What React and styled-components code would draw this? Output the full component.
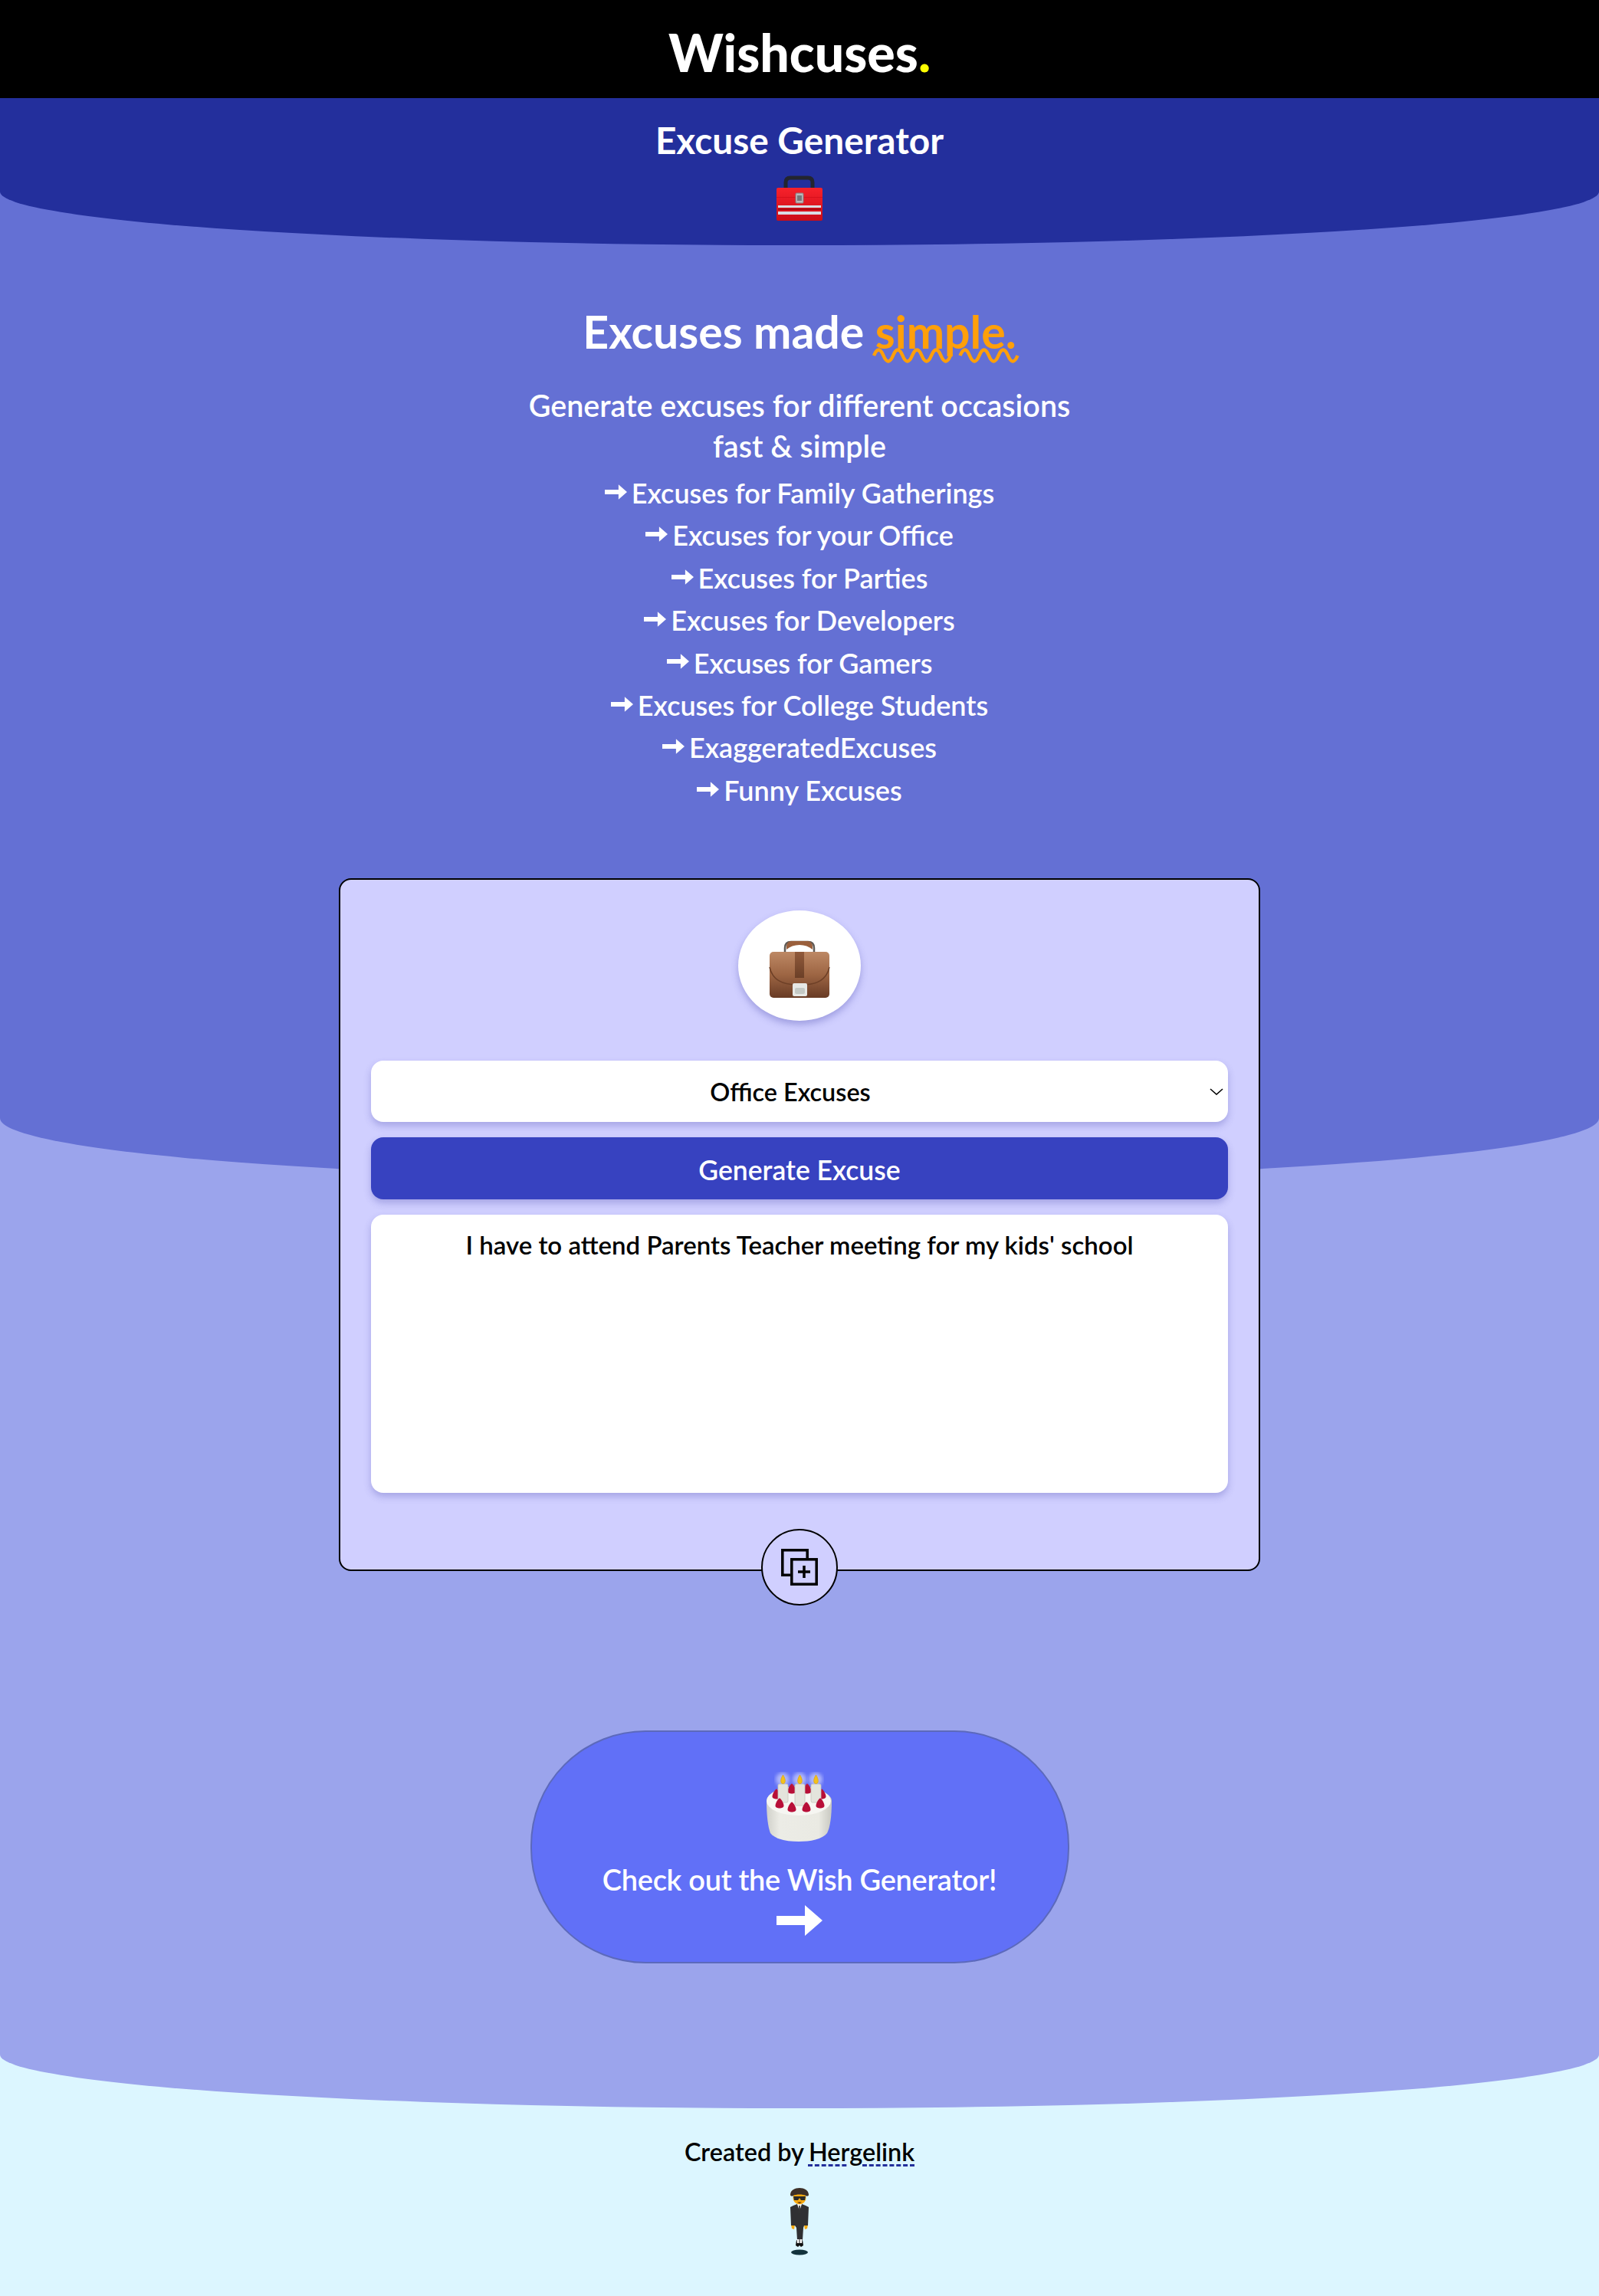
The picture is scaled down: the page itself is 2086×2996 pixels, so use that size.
import React from "react";
import styled, { createGlobalStyle } from "styled-components";

const CURVE = 70;
const INTRO_CURVE = 81;

const GlobalStyle = createGlobalStyle`
  html, body {
    margin: 0;
    padding: 0;
    background: #dcf6ff;
    font-family: Lato, "Noto Sans", sans-serif;
  }
  * { box-sizing: border-box; }
`;

const Header = styled.header`
  height: 128px;
  padding-top: 8px;
  background: #000;
  display: flex;
  justify-content: center;
  align-items: center;
  position: relative;
  z-index: 4;
`;
const Logo = styled.h1`
  margin: 0;
  color: #fff;
  font-size: 68px;
  font-weight: 900;
  line-height: 1;
  span { color: #ffff00; }
`;

const Band = styled.section`
  position: relative;
  display: flex;
  flex-direction: column;
  align-items: center;
  background: ${({ $bg }) => $bg};
  z-index: ${({ $layer }) => $layer};
  border-radius: 0 0 50% 50% / 0 0 ${({ $curve }) => $curve}px ${({ $curve }) => $curve}px;
`;
const ToolBand = styled(Band)`
  height: 192px;
  padding-top: 27px;
`;
const IntroBand = styled(Band)`
  margin-top: -${CURVE}px;
  padding-top: ${CURVE + 79}px;
`;
const WishBand = styled(Band)`
  margin-top: -${INTRO_CURVE}px;
  padding: 799px 0 189px;
`;

const ToolTitle = styled.h2`
  margin: 0 0 17px;
  color: #fff;
  font-size: 47.8px;
  line-height: 56px;
  font-weight: 700;
`;
const Headline = styled.h2`
  margin: 0 0 35px;
  color: #fff;
  font-size: 59px;
  line-height: 68px;
  font-weight: 700;
`;
const Simple = styled.span`
  position: relative;
  color: #ff9f0a;
`;
const Squiggle = styled.svg`
  position: absolute;
  left: -3px;
  top: 58px;
  width: 191px;
  height: 18px;
  overflow: visible;
  fill: none;
  stroke: #ff9f0a;
  stroke-width: 4.5;
`;
const Lead = styled.p`
  margin: 0 0 8px;
  color: #fff;
  font-size: 39.5px;
  line-height: 53px;
  font-weight: 600;
  text-align: center;
`;
const List = styled.ul`
  margin: 0 0 87px;
  padding: 0;
  list-style: none;
`;
const Item = styled.li`
  display: flex;
  justify-content: center;
  align-items: center;
  gap: 6px;
  color: #fff;
  font-size: 36px;
  line-height: 55.4px;
  font-weight: 600;
  svg { margin-top: -4px; }
`;

const Card = styled.div`
  position: relative;
  width: 1202px;
  margin-bottom: -510px;
  padding: 40px 40px 100px;
  display: flex;
  flex-direction: column;
  align-items: center;
  background: #d0cfff;
  border: 2px solid #000;
  border-radius: 16px;
`;
const Badge = styled.div`
  width: 160px;
  height: 144px;
  margin-bottom: 52px;
  display: flex;
  align-items: center;
  justify-content: center;
  background: #fff;
  border-radius: 50%;
  box-shadow: 0 5px 10px rgba(70, 70, 170, 0.35);
`;
const fieldShadow = "0 5px 10px rgba(70, 70, 170, 0.3)";
const SelectWrap = styled.div`
  position: relative;
  width: 100%;
  margin-bottom: 20px;
`;
const Select = styled.select`
  display: block;
  width: 100%;
  height: 80px;
  padding: 0 24px 0 0;
  appearance: none;
  border: none;
  border-radius: 16px;
  background: #fff;
  color: #000;
  font: 600 32.4px Lato, sans-serif;
  text-align: center;
  box-shadow: ${fieldShadow};
`;
const Chevron = styled.svg`
  position: absolute;
  right: 6px;
  top: 36px;
  width: 18px;
  height: 9px;
  fill: none;
  stroke: #000;
  stroke-width: 1.6;
  pointer-events: none;
`;
const Generate = styled.button`
  width: 100%;
  height: 81px;
  margin-bottom: 20px;
  padding: 3px 0 0;
  border: none;
  border-radius: 16px;
  background: #3742c0;
  color: #fff;
  font: 600 35.5px Lato, sans-serif;
  box-shadow: ${fieldShadow};
`;
const Output = styled.textarea`
  display: block;
  width: 100%;
  height: 363px;
  padding: 19px 16px 16px;
  border: none;
  border-radius: 16px;
  background: #fff;
  color: #000;
  font: 600 33px/40px Lato, sans-serif;
  text-align: center;
  resize: none;
  box-shadow: ${fieldShadow};
`;
const CopyButton = styled.button`
  position: absolute;
  left: 50%;
  bottom: -47px;
  width: 100px;
  height: 100px;
  margin-left: -50px;
  padding: 0;
  display: flex;
  align-items: center;
  justify-content: center;
  background: #d0cfff;
  border: 2px solid #000;
  border-radius: 50%;
`;

const Pill = styled.a`
  width: 703px;
  height: 304px;
  padding-top: 52px;
  display: flex;
  flex-direction: column;
  align-items: center;
  background: #6170f7;
  border: 2px solid #5c69bb;
  border-radius: 150px;
  color: #fff;
  text-decoration: none;
`;
const PillText = styled.span`
  margin: 20px 0 10px;
  font-size: 38px;
  line-height: 48px;
  font-weight: 600;
  letter-spacing: -0.3px;
`;

const Footer = styled.footer`
  margin-top: -${CURVE}px;
  padding: ${CURVE + 37}px 0 46px;
  display: flex;
  flex-direction: column;
  align-items: center;
  background: #dcf6ff;
`;
const Credit = styled.p`
  margin: 0 0 25px;
  display: flex;
  gap: 6px;
  color: #000;
  font-size: 32.4px;
  line-height: 40px;
  font-weight: 600;
`;
const CreditLink = styled.a`
  color: #000;
  text-decoration: underline dashed #232f9c 3px;
  text-underline-offset: 4px;
`;

const wave = (start, halves) => {
  let d = `M${start} 9q6.25 -15 12.5 0`;
  for (let i = 1; i < halves; i++) d += "t12.5 0";
  return d;
};

const Arrow = ({ width, height }) => (
  <svg width={width} height={height} viewBox="0 0 60 40" fill="#fff" aria-hidden="true">
    <path d="M0 14H37V0L60 20 37 40V26H0Z" />
  </svg>
);

const Toolbox = () => (
  <svg width="64" height="64" viewBox="0 0 64 64" aria-hidden="true">
    <defs>
      <linearGradient id="boxRed" x1="0" y1="0" x2="0" y2="1">
        <stop offset="0" stopColor="#f7212b" />
        <stop offset="1" stopColor="#cb0d18" />
      </linearGradient>
    </defs>
    <path d="M14 18V10Q14 4 20 4H43Q49 4 49 10V18" fill="none" stroke="#23252f" strokeWidth="5" />
    <rect x="2" y="17" width="60" height="43" rx="2" fill="url(#boxRed)" />
    <rect x="2" y="29" width="60" height="1" fill="#d8101c" />
    <rect x="4" y="40" width="56" height="3" fill="#d9dde4" />
    <rect x="4" y="48" width="56" height="4" fill="#d9dde4" />
    <rect x="4" y="44" width="56" height="2" fill="#a90a14" />
    <rect x="27" y="24" width="10" height="13" rx="1" fill="#b9b9bb" stroke="#8a7a7c" />
    <rect x="29" y="27" width="6" height="7" fill="#77777b" />
  </svg>
);

const Briefcase = () => (
  <svg width="96" height="96" viewBox="0 0 96 96" aria-hidden="true">
    <defs>
      <linearGradient id="caseBody" x1="0" y1="0" x2="0" y2="1">
        <stop offset="0" stopColor="#bd8864" />
        <stop offset="0.5" stopColor="#9d6543" />
        <stop offset="1" stopColor="#683b25" />
      </linearGradient>
      <linearGradient id="caseStrap" x1="0" y1="0" x2="0" y2="1">
        <stop offset="0" stopColor="#915a3b" />
        <stop offset="1" stopColor="#6b3f27" />
      </linearGradient>
    </defs>
    <path d="M29 32V25Q29 17 37 17H59Q67 17 67 25V32" fill="none" stroke="#5f5a55" strokeWidth="2.5" />
    <path d="M31 27V24Q31 16 38 16H58Q65 16 65 24V27Q58 21 48 21 38 21 31 27Z" fill="#9a5f3c" />
    <rect x="9" y="30" width="78" height="60" rx="5" fill="url(#caseBody)" />
    <path d="M9 50Q14 73 44 73H52Q82 73 87 50" fill="none" stroke="#6e4027" strokeWidth="1.5" />
    <rect x="42" y="30" width="12" height="34" fill="url(#caseStrap)" />
    <rect x="39" y="71" width="19" height="17" rx="2" fill="#e6e8e5" />
    <rect x="42" y="77" width="13" height="8" rx="2" fill="#c4c9c5" />
  </svg>
);

const berries = [[38, 23], [58, 23], [18, 30], [77, 30], [22, 42], [38, 47], [57, 47], [75, 42]];
const candles = [[20, 38], [42, 42], [63, 38]];

const Berry = ({ x, y, r }) => (
  <path
    d={`M${x} ${y - r * 1.4}C${x + r * 0.6} ${y - r} ${x + r} ${y} ${x + r} ${y + r * 0.4}C${x + r} ${y + r * 1.2} ${x - r} ${y + r * 1.2} ${x - r} ${y + r * 0.4}C${x - r} ${y} ${x - r * 0.6} ${y - r} ${x} ${y - r * 1.4}Z`}
    fill="#b80f38"
  />
);

const Cake = () => (
  <svg width="96" height="96" viewBox="0 0 96 96" aria-hidden="true">
    <defs>
      <linearGradient id="cakeSide" x1="0" y1="0" x2="1" y2="0">
        <stop offset="0" stopColor="#d0d0ca" />
        <stop offset="0.2" stopColor="#ecece6" />
        <stop offset="0.8" stopColor="#eaeae3" />
        <stop offset="1" stopColor="#c8c8c1" />
      </linearGradient>
      <filter id="glow">
        <feGaussianBlur stdDeviation="2.5" />
      </filter>
    </defs>
    <path d="M5 38C5 28 24 20 47 20S90 28 90 38C90 58 88 72 84 80 78 88 62 91 47 91S16 88 10 80C7 72 5 58 5 38Z" fill="url(#cakeSide)" />
    <ellipse cx="47" cy="38" rx="42" ry="19" fill="#f6f6f2" />
    {berries.slice(0, 4).map(([x, y]) => <Berry key={`${x}-${y}`} x={x} y={y} r={5.5} />)}
    {candles.map(([x, h]) => (
      <g key={x}>
        <circle cx={x + 6} cy="10" r="9" fill="#fff" opacity="0.5" filter="url(#glow)" />
        <rect x={x} y="16" width="13" height={h - 14} rx="2" fill="#e4e4dc" stroke="#c6c6bc" strokeWidth="0.8" />
        <path d={`M${x + 6.5} 4C${x + 9} 8 ${x + 10} 11 ${x + 9} 14 ${x + 8} 16 ${x + 5} 16 ${x + 4} 14 ${x + 3} 11 ${x + 4} 8 ${x + 6.5} 4Z`} fill="#f2c11c" stroke="#d99a10" strokeWidth="0.6" />
      </g>
    ))}
    {berries.slice(4).map(([x, y]) => <Berry key={`${x}-${y}`} x={x} y={y} r={5.5} />)}
  </svg>
);

const Levitating = () => (
  <svg width="32" height="96" viewBox="0 0 32 96" aria-hidden="true">
    <ellipse cx="16" cy="86" rx="11" ry="3.5" fill="#12323c" />
    <path d="M5 50L10 50 9 56 6 55Z" fill="#f2a80e" />
    <path d="M27 50L22 50 23 56 26 55Z" fill="#f2a80e" />
    <path d="M8 25L13 23H19L24 25 28 27 27 51H22L21 54 20 70H13L12 54 10 51H5L4 27Z" fill="#303032" />
    <path d="M13 23L16 32 19 23Z" fill="#fff" />
    <path d="M15.2 25H16.8L17 32 16 36 15 32Z" fill="#333" />
    <circle cx="16" cy="15" r="8.5" fill="#f7a90f" />
    <path d="M4 11C4 5 10 2 16 2S28 5 28 11C28 13 25 13 24 12 21 10 11 10 8 12 7 13 4 13 4 11Z" fill="#3d3028" />
    <path d="M8 13H24L23 18H18L16 15 14 18H9Z" fill="#2b2a28" />
    <path d="M13 20.5H19L16 22.5Z" fill="#5b2d0d" />
    <path d="M12 70H16V77L14 79 11 77Z" fill="#111" />
    <path d="M16 70H20L21 77 18 79 16 77Z" fill="#111" />
    <path d="M12.5 69H15.5V74H13Z" fill="#fff" />
    <path d="M16.5 69H19.5L19 74H16.5Z" fill="#fff" />
  </svg>
);

const CopyIcon = () => (
  <svg width="48" height="48" viewBox="0 0 48 48" fill="none" stroke="#000" strokeWidth="3.5" aria-hidden="true">
    <path d="M12 34.2H1.8V1.8H34.2V12" />
    <rect x="13.8" y="13.8" width="32.4" height="32.4" />
    <path d="M30 22V38M22 30H38" />
  </svg>
);

const occasions = [
  "Excuses for Family Gatherings",
  "Excuses for your Office",
  "Excuses for Parties",
  "Excuses for Developers",
  "Excuses for Gamers",
  "Excuses for College Students",
  "ExaggeratedExcuses",
  "Funny Excuses",
];

export default function App() {
  return (
    <>
      <GlobalStyle />
      <Header>
        <Logo>Wishcuses<span>.</span></Logo>
      </Header>
      <ToolBand $bg="#232f9c" $layer={3} $curve={CURVE}>
        <ToolTitle>Excuse Generator</ToolTitle>
        <Toolbox />
      </ToolBand>
      <IntroBand $bg="#6470d4" $layer={2} $curve={INTRO_CURVE}>
        <Headline>
          Excuses made{" "}
          <Simple>
            simple.
            <Squiggle viewBox="0 0 191 18" aria-hidden="true">
              <path d={wave(1, 8)} />
              <path d={wave(113.5, 6)} />
            </Squiggle>
          </Simple>
        </Headline>
        <Lead>Generate excuses for different occasions<br />fast &amp; simple</Lead>
        <List>
          {occasions.map((text) => (
            <Item key={text}><Arrow width={29} height={20} />{text}</Item>
          ))}
        </List>
        <Card>
          <Badge><Briefcase /></Badge>
          <SelectWrap>
            <Select defaultValue="office">
              <option value="office">Office Excuses</option>
              <option value="family">Family Excuses</option>
              <option value="party">Party Excuses</option>
            </Select>
            <Chevron viewBox="0 0 18 9" aria-hidden="true"><path d="M1 1L9 8 17 1" /></Chevron>
          </SelectWrap>
          <Generate>Generate Excuse</Generate>
          <Output readOnly value="I have to attend Parents Teacher meeting for my kids' school" />
          <CopyButton aria-label="Copy"><CopyIcon /></CopyButton>
        </Card>
      </IntroBand>
      <WishBand $bg="#9ba4ec" $layer={1} $curve={CURVE}>
        <Pill href="#">
          <Cake />
          <PillText>Check out the Wish Generator!</PillText>
          <Arrow width={60} height={40} />
        </Pill>
      </WishBand>
      <Footer>
        <Credit>Created by <CreditLink href="#">Hergelink</CreditLink></Credit>
        <Levitating />
      </Footer>
    </>
  );
}
